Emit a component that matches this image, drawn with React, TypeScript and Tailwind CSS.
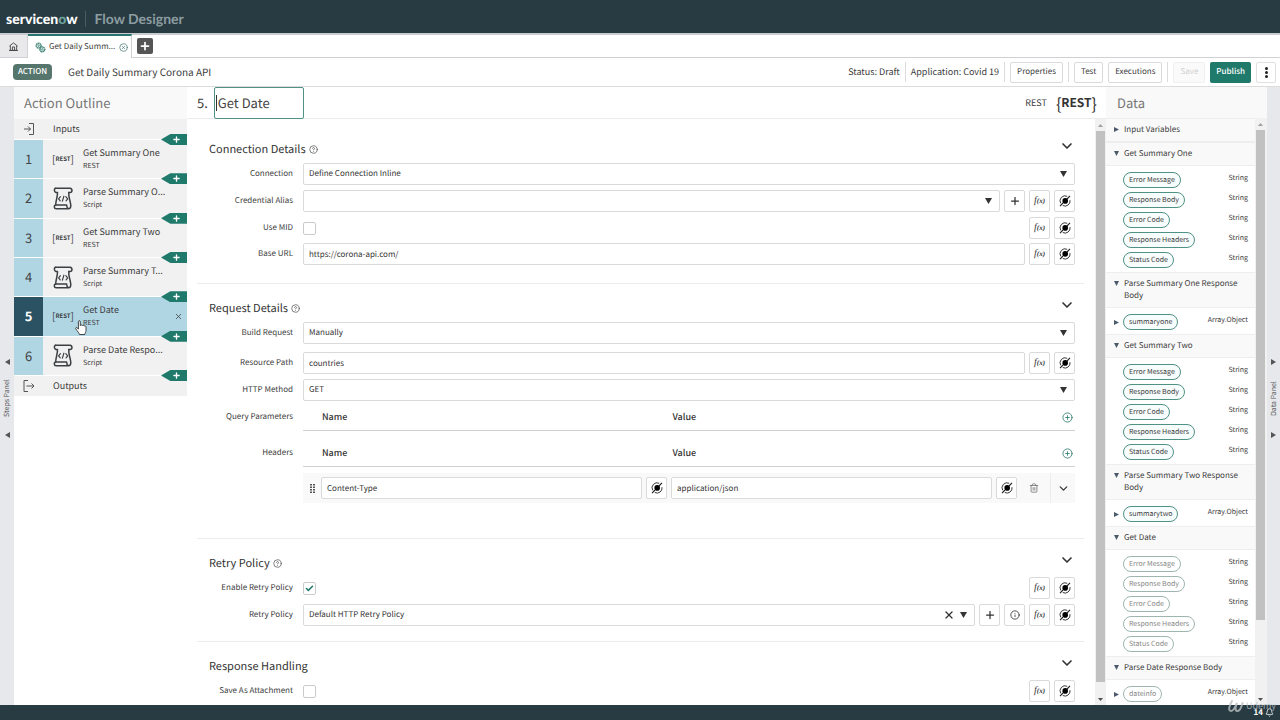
import React, { useState } from 'react';
import { Check, ChevronDown, Plus, X, Info, CircleHelp, CirclePlus, CircleX, Trash2, Bell } from 'lucide-react';
import clsx from 'clsx';

interface Step {
  name: string;
  kind: 'REST' | 'Script';
}

interface DataGroup {
  title: string;
  open: boolean;
  muted?: boolean;
  array?: boolean;
  pills: string[];
}

const STEPS: Step[] = [
  { name: 'Get Summary One', kind: 'REST' },
  { name: 'Parse Summary O...', kind: 'Script' },
  { name: 'Get Summary Two', kind: 'REST' },
  { name: 'Parse Summary T...', kind: 'Script' },
  { name: 'Get Date', kind: 'REST' },
  { name: 'Parse Date Respo...', kind: 'Script' },
];

const REST_PILLS = ['Error Message', 'Response Body', 'Error Code', 'Response Headers', 'Status Code'];

const DATA_GROUPS: DataGroup[] = [
  { title: 'Input Variables', open: false, pills: [] },
  { title: 'Get Summary One', open: true, pills: REST_PILLS },
  { title: 'Parse Summary One Response Body', open: true, array: true, pills: ['summaryone'] },
  { title: 'Get Summary Two', open: true, pills: REST_PILLS },
  { title: 'Parse Summary Two Response Body', open: true, array: true, pills: ['summarytwo'] },
  { title: 'Get Date', open: true, muted: true, pills: REST_PILLS },
  { title: 'Parse Date Response Body', open: true, muted: true, array: true, pills: ['dateinfo'] },
];

const Triangle = ({ dir, className }: { dir: 'up' | 'down' | 'left' | 'right'; className?: string }) => {
  const points = {
    up: '0,8 8,8 4,0',
    down: '0,0 8,0 4,8',
    left: '8,0 8,8 0,4',
    right: '0,0 0,8 8,4',
  };
  return (
    <svg viewBox="0 0 8 8" preserveAspectRatio="none" className={clsx('shrink-0 fill-current', className)} aria-hidden="true">
      <polygon points={points[dir]} />
    </svg>
  );
};

const ScriptIcon = () => (
  <svg viewBox="0 0 20 23" className="h-[23px] w-5 text-[#3c4043]" fill="none" stroke="currentColor" strokeWidth="1.5" strokeLinejoin="round" strokeLinecap="round">
    <path d="M2.500 1.200h14.500c2.600.3 2.600 4.300 0 4.300h-1.200" />
    <path d="M2.500 1.200c-1.600.6-1.600 3.600.4 4.300h1.600c.2 4.500-1.800 8-1.800 12.500" />
    <path d="M15.800 5.500c-.6 4.500 2 9.500 2 13 0 1.800-.6 3.300-2.200 3.300H3.200c-2.400 0-2.600-3.600-.2-3.800h10.600c0 1.600.6 3 2 3.800" />
    <path d="M7.400 9.600 5.600 11.800l1.600 2M12.800 9.600l1.900 2.200-1.600 2M10.900 9.200l-1.500 5" strokeWidth="1.200" />
  </svg>
);

const PillIcon = () => (
  <svg viewBox="0 0 12 12" className="h-3 w-3" fill="none" stroke="#222" strokeWidth=".9">
    <circle cx="6.200" cy="5.900" r="2.800" fill="#000" stroke="none" />
    <path d="M8.200 1.300A5 5 0 0 0 1.700 8.300" />
    <path d="M3.800 10.500A5 5 0 0 0 11 5.200" />
    <path d="M8 4 11 .900M1 11.200 4 8" strokeWidth="1.100" />
  </svg>
);

const GearsIcon = () => (
  <svg viewBox="0 0 12 12" className="h-[11px] w-[11px] shrink-0" fill="none" stroke="#4c8c80">
    <circle cx="4" cy="4" r="2.600" strokeWidth="1.700" strokeDasharray="1.700 .3" />
    <circle cx="4" cy="4" r=".8" />
    <circle cx="8" cy="8" r="2.600" strokeWidth="1.700" strokeDasharray="1.700 .3" />
    <circle cx="8" cy="8" r=".8" />
  </svg>
);

const HomeIcon = () => (
  <svg viewBox="0 0 10 10" className="h-[9px] w-[9px]" fill="none" stroke="#444" strokeWidth="1">
    <path d="M.5 4.500 5 1l4.500 3.500M1.500 4v5.300h7V4M3.800 9V5.500h2.400V9M0 9.400h10" />
  </svg>
);

const ExitIcon = ({ out }: { out?: boolean }) => (
  <svg viewBox="0 0 12 12" className="h-3 w-3" fill="none" stroke="#555" strokeWidth="1">
    {out ? <path d="M5 .5H1v11h4M3.500 6h7.500M8.500 3.500 11 6 8.500 8.500" /> : <path d="M6 .5h4.500v11H6M1 6h6.500M5 3.500 7.500 6 5 8.500" />}
  </svg>
);

const IconButton = ({ label, children }: { label: string; children: React.ReactNode }) => (
  <button
    type="button"
    aria-label={label}
    className="flex h-[22px] w-[21px] shrink-0 items-center justify-center rounded-xs border border-[#d8dadb] bg-white text-[#333]"
  >
    {children}
  </button>
);

const PillButton = () => (
  <IconButton label="Data pill picker">
    <PillIcon />
  </IconButton>
);

const FxButtons = () => (
  <>
    <IconButton label="Transform function">
      <span className="flex items-baseline font-['Liberation_Serif',serif] text-[10px] leading-3 italic">
        f<span className="text-[7px] font-bold">(x)</span>
      </span>
    </IconButton>
    <PillButton />
  </>
);

const PlusButton = ({ label }: { label: string }) => (
  <IconButton label={label}>
    <Plus className="h-3 w-3" strokeWidth={2.5} />
  </IconButton>
);

interface FieldProps {
  id: string;
  label: string;
  className?: string;
  children: React.ReactNode;
}

const Field = ({ id, label, className, children }: FieldProps) => (
  <div className={clsx('flex items-center', className)}>
    <label htmlFor={id} className="mr-[10px] w-24 shrink-0 text-right text-[8px]">
      {label}
    </label>
    <div className="flex min-w-0 flex-1 items-center gap-1">{children}</div>
  </div>
);

const inputClass = 'h-[22px] w-full min-w-0 flex-1 rounded-xs border border-[#d8dadb] bg-white px-[5px] text-[8px] text-[#333] outline-none';

const SelectBox = ({ id, value, clearable }: { id: string; value: string; clearable?: boolean }) => (
  <div className="relative flex min-w-0 flex-1">
    <select id={id} defaultValue={value} className={clsx(inputClass, 'appearance-none')}>
      <option value={value}>{value}</option>
    </select>
    <div className="pointer-events-none absolute inset-y-0 right-2 flex items-center gap-[5px] text-[#333]">
      {clearable && <X className="h-3 w-3" strokeWidth={2.5} />}
      <Triangle dir="down" className="h-[6px] w-[7px]" />
    </div>
  </div>
);

const CheckBox = ({ id, initial = false }: { id: string; initial?: boolean }) => {
  const [checked, setChecked] = useState(initial);
  return (
    <div className="relative mr-auto flex h-[22px] items-center">
      <input
        id={id}
        type="checkbox"
        checked={checked}
        onChange={() => setChecked(prev => !prev)}
        className="h-[13px] w-[13px] appearance-none rounded-xs border border-[#c9cccd] bg-white"
      />
      {checked && <Check className="pointer-events-none absolute left-[2px] h-[9px] w-[9px] text-[#1f7a6c]" strokeWidth={4} />}
    </div>
  );
};

interface SectionProps {
  title: string;
  help?: boolean;
  className?: string;
  children: React.ReactNode;
}

const Section = ({ title, help, className, children }: SectionProps) => (
  <section className={clsx('border-b border-[#ececec] pt-[11px] pr-[9px]', className)}>
    <div className="mb-px flex h-[26px] items-center pl-3">
      <h2 className="text-[11px] text-[#333]">{title}</h2>
      {help && <CircleHelp className="ml-[3px] h-[9px] w-[9px] text-[#555]" />}
      <button type="button" aria-label={`Collapse ${title}`} className="ml-auto pb-[6px]">
        <ChevronDown className="h-4 w-4 text-[#333]" strokeWidth={2.5} />
      </button>
    </div>
    {children}
  </section>
);

const TableHead = () => (
  <thead className="block">
    <tr className="flex h-[26px] items-center border-b border-[#cfd2d3] text-left text-[9px] text-[#333]">
      <th className="w-[18px] shrink-0" />
      <th className="min-w-0 flex-1 pb-[2px] pl-px font-medium">Name</th>
      <th className="min-w-0 flex-1 pb-[2px] font-medium">Value</th>
      <th className="flex w-[52px] shrink-0 justify-end pr-[2px]">
        <button type="button" aria-label="Add row">
          <CirclePlus className="h-[11px] w-[11px] text-[#3c8578]" />
        </button>
      </th>
    </tr>
  </thead>
);

const ScrollBar = ({ thumb }: { thumb: string }) => (
  <div className="flex w-[11px] shrink-0 flex-col items-center bg-[#f1f1f1]" aria-hidden="true">
    <div className="flex h-3 items-center text-[#a0a0a0]">
      <Triangle dir="up" className="h-[3px] w-[5px]" />
    </div>
    <div className="flex w-[9px] min-h-0 flex-1">
      <div className={clsx('w-full bg-[#c1c1c1]', thumb)} />
    </div>
    <div className="flex h-3 items-center text-[#505050]">
      <Triangle dir="down" className="h-[3px] w-[5px]" />
    </div>
  </div>
);

const Rail = ({ label, dir, className }: { label: string; dir: 'left' | 'right'; className: string }) => (
  <button type="button" className={clsx('flex shrink-0 flex-col items-center justify-center gap-[14px] bg-[#e6e8ec] pt-1 text-[#555]', className)}>
    <Triangle dir={dir} className="h-[6px] w-[5px]" />
    <span className="flex h-[39px] items-center justify-center text-[7px] leading-3 whitespace-nowrap rotate-180 [writing-mode:vertical-rl]">
      {label}
    </span>
    <Triangle dir={dir} className="h-[6px] w-[5px]" />
  </button>
);

const AddMarker = () => (
  <button
    type="button"
    aria-label="Add step"
    className="absolute -top-[6px] right-0 z-10 flex h-[11px] w-[26px] items-center justify-center bg-[#1f7a6c] pl-[5px] text-white [clip-path:polygon(0_50%,36%_0,100%_0,100%_100%,36%_100%)]"
  >
    <Plus className="h-[9px] w-[9px]" strokeWidth={3.5} />
  </button>
);

const OutlinePanel = ({ selected, onSelect }: { selected: number; onSelect: (i: number) => void }) => (
  <aside className="relative flex w-[173px] shrink-0 flex-col">
    <h2 className="flex h-8 shrink-0 items-center bg-[#f9f9f9] pl-[10px] text-[13px] text-[#777]">Action Outline</h2>
    <div className="flex h-5 shrink-0 items-center bg-[#f1f1f1] pl-[9px] text-[9px]">
      <ExitIcon />
      <span className="ml-[18px]">Inputs</span>
    </div>
    <ol className="grid h-[236px] shrink-0 grid-rows-6">
      {STEPS.map((step, i) => {
        const active = i === selected;
        return (
          <li key={step.name} className={clsx('relative flex border-t border-white', active ? 'bg-[#b0d6e4]' : 'bg-[#f1f1f1]')}>
            <button type="button" onClick={() => onSelect(i)} className="flex min-w-0 flex-1 items-stretch text-left">
              <span
                className={clsx(
                  'flex w-[29px] shrink-0 items-center justify-center text-[13px]',
                  active ? 'bg-[#2b5263] font-bold text-white' : 'bg-[#b0d6e4] text-[#444]',
                )}
              >
                {i + 1}
              </span>
              <span className="flex w-10 shrink-0 items-center justify-center">
                {step.kind === 'REST' ? (
                  <span className="flex items-center text-[#3c4043]">
                    <span className="text-[10px] leading-3">[</span>
                    <span className="text-[6px] font-bold">REST</span>
                    <span className="text-[10px] leading-3">]</span>
                  </span>
                ) : (
                  <ScriptIcon />
                )}
              </span>
              <span className="pt-[6px] whitespace-nowrap">
                <span className="block text-[9px] leading-[13px]">{step.name}</span>
                <span className="block text-[7px] leading-[14px]">{step.kind}</span>
              </span>
            </button>
            {active && (
              <button type="button" aria-label="Delete step" className="absolute inset-y-0 right-1 flex items-center">
                <X className="h-[9px] w-[9px]" />
              </button>
            )}
            <AddMarker />
          </li>
        );
      })}
    </ol>
    <div className="relative flex h-[21px] shrink-0 items-center border-t border-white bg-[#f1f1f1] pl-[9px] text-[9px]">
      <ExitIcon out />
      <span className="ml-[18px]">Outputs</span>
      <AddMarker />
    </div>
    {/* pointer hovering the selected step */}
    <svg viewBox="0 0 12 15" className="pointer-events-none absolute top-[233px] left-[61px] z-20 h-[15px] w-3" fill="#fff" stroke="#333" strokeWidth=".9" strokeLinejoin="round">
      <path d="M3.400 9.200V1.700c0-1.400 1.900-1.400 1.900 0v3.800c.2-.9 1.800-.8 1.900.2.300-.8 1.800-.6 1.900.4.500-.7 1.900-.3 1.900.8v3.500c0 2-1.200 2.600-1.200 4.100H4.400c0-1.600-2-3-3.600-5.600-.6-1.200.7-2 1.600-1z" />
    </svg>
  </aside>
);

const DataPanel = () => (
  <aside className="flex w-[161px] shrink-0 flex-col">
    <h2 className="flex h-[31px] shrink-0 items-center bg-[#f9f9f9] pl-[11px] text-[13px] text-[#777]">Data</h2>
    <div className="flex min-h-0 flex-1">
      <div className="min-w-0 flex-1 overflow-hidden">
        {DATA_GROUPS.map(group => (
          <div key={group.title}>
            <button
              type="button"
              className="flex w-full items-baseline border-y border-[#eee] bg-[#f9f9f9] py-[5px] pr-3 pl-2 text-left text-[8px] leading-3"
            >
              <Triangle dir={group.open ? 'down' : 'right'} className="mr-[5px] h-[5px] w-[5px] text-[#4b5b6b]" />
              <span>{group.title}</span>
            </button>
            {group.open && (
              <ul className="pt-1 pb-[2px]">
                {group.pills.map(pill => (
                  <li key={pill} className="flex h-5 items-center pr-[7px] pl-2">
                    <span className="w-[9px] shrink-0">{group.array && <Triangle dir="right" className="h-[5px] w-[5px] text-[#4b5b6b]" />}</span>
                    <span
                      className={clsx(
                        'flex h-4 items-center rounded-full border px-[5px] text-[7px]',
                        group.muted ? 'border-[#9fb5b0] text-[#888]' : 'border-[#4f9184] bg-[#f7fcfc]',
                      )}
                    >
                      {pill}
                    </span>
                    <span className="ml-auto self-start text-[7px] leading-4">{group.array ? 'Array.Object' : 'String'}</span>
                  </li>
                ))}
              </ul>
            )}
          </div>
        ))}
      </div>
      <ScrollBar thumb="h-[87%]" />
      <div className="w-px bg-[#f1f1f1]" />
    </div>
  </aside>
);

const ToolButton = ({ children }: { children: React.ReactNode }) => (
  <button type="button" className="h-[21px] rounded-xs border border-[#d8dadb] bg-white px-[6px]">
    {children}
  </button>
);

const Divider = () => <span className="h-5 w-px bg-[#dcdcdc]" />;

export default function App() {
  const [selected, setSelected] = useState(4);

  return (
    <div className="relative flex h-screen flex-col overflow-hidden bg-white font-['Noto_Sans_CJK_SC','Noto_Sans',sans-serif] text-[9px] leading-4 text-[#3c3c3c] [&_*]:[text-rendering:geometricPrecision]">
      <header className="flex h-[33px] shrink-0 items-center bg-[#283b42] pt-1 pl-[6px] font-['Lato',sans-serif]">
        <span className="text-[14px] font-black text-white">
          servicen<span className="text-[#6ea39a]">o</span>w
        </span>
        <span className="mx-2 h-4 w-px bg-[#4a5c62]" />
        <span className="text-[14px] font-bold text-[#8d9da1]">Flow Designer</span>
      </header>

      <nav className="flex h-[25px] shrink-0 items-stretch border-t-2 border-[#c9cccf]">
        <a href="#home" aria-label="Home" className="flex w-7 items-center justify-center border-r border-b border-[#cfd1d4] bg-[#e9e9ec]">
          <HomeIcon />
        </a>
        <div className="-mt-px flex w-[104px] items-center border-t-2 border-r border-t-[#2a7472] border-r-[#cfd1d4] pl-[7px] text-[8px]">
          <GearsIcon />
          <a href="#action" className="ml-[3px] whitespace-nowrap">
            Get Daily Summ...
          </a>
          <button type="button" aria-label="Close tab" className="mr-[3px] ml-auto">
            <CircleX className="h-[9px] w-[9px] text-[#4c7c74]" />
          </button>
        </div>
        <div className="flex flex-1 items-center border-b border-[#cfd1d4] pl-[5px]">
          <button type="button" aria-label="New tab" className="flex h-4 w-4 items-center justify-center rounded-xs bg-[#555] text-white">
            <Plus className="h-3 w-3" strokeWidth={3.5} />
          </button>
        </div>
      </nav>

      <div className="flex h-[29px] shrink-0 items-center border-b border-[#dcdcdc] pr-1 pl-[13px] text-[8px]">
        <span className="flex h-4 w-[39px] items-center justify-center rounded-sm bg-[#56766d] font-medium text-white">ACTION</span>
        <h1 className="ml-4 text-[10px]">Get Daily Summary Corona API</h1>
        <div className="ml-auto flex items-center gap-[5px]">
          <span className="text-[9px]">Status: Draft</span>
          <Divider />
          <span className="text-[9px]">Application: Covid 19</span>
          <Divider />
          <ToolButton>Properties</ToolButton>
          <Divider />
          <ToolButton>Test</ToolButton>
          <ToolButton>Executions</ToolButton>
          <Divider />
          <button type="button" disabled className="h-[21px] rounded-xs border border-[#f0f0f0] bg-[#fafafa] px-[6px] text-[#d0d0d0]">
            Save
          </button>
          <button type="button" className="h-[21px] rounded-xs bg-[#1f7a6c] px-[6px] font-medium text-white">
            Publish
          </button>
          <button type="button" aria-label="More actions" className="flex h-[21px] w-5 flex-col items-center justify-center gap-px rounded-xs border border-[#e0e0e0]">
            <span className="h-[3px] w-[3px] rounded-full bg-[#222]" />
            <span className="h-[3px] w-[3px] rounded-full bg-[#222]" />
            <span className="h-[3px] w-[3px] rounded-full bg-[#222]" />
          </button>
        </div>
      </div>

      <main className="flex min-h-0 flex-1">
        <Rail label="Steps Panel" dir="left" className="w-[14px]" />
        <OutlinePanel selected={selected} onSelect={setSelected} />

        <div className="flex min-w-0 flex-1 flex-col">
          <div className="flex h-8 shrink-0 items-center border-b border-[#ececec] pr-[9px] pl-[10px]">
            <label htmlFor="step-name" className="mr-[6px] text-[13px]">
              5.
            </label>
            <div className="relative">
              <input
                id="step-name"
                defaultValue="Get Date"
                className="block h-8 w-[90px] rounded-xs border border-[#4f9184] bg-white px-[3px] text-[13px] text-[#444] outline-none"
              />
              <span className="absolute top-2 left-[2px] h-4 w-px bg-[#333]" />
            </div>
            <span className="mr-[9px] ml-auto text-[9px]">REST</span>
            <span className="flex items-center text-[#333]">
              <span className="text-[16px]">{'{'}</span>
              <span className="text-[12px] font-bold">REST</span>
              <span className="text-[16px]">{'}'}</span>
            </span>
          </div>

          <div className="flex min-h-0 flex-1">
            <div className="min-w-0 flex-1 overflow-hidden pt-[6px] pr-[11px] pl-[10px]">
              <Section title="Connection Details" help className="pb-[18px]">
                <Field id="connection" label="Connection" className="mb-[5px]">
                  <SelectBox id="connection" value="Define Connection Inline" />
                </Field>
                <Field id="alias" label="Credential Alias" className="mb-[5px]">
                  <SelectBox id="alias" value="" />
                  <PlusButton label="Add alias" />
                  <FxButtons />
                </Field>
                <Field id="mid" label="Use MID" className="mb-1">
                  <CheckBox id="mid" />
                  <FxButtons />
                </Field>
                <Field id="base-url" label="Base URL">
                  <input id="base-url" defaultValue="https://corona-api.com/" className={inputClass} />
                  <FxButtons />
                </Field>
              </Section>

              <Section title="Request Details" help className="pb-[35px]">
                <Field id="build" label="Build Request" className="mb-2">
                  <SelectBox id="build" value="Manually" />
                </Field>
                <Field id="path" label="Resource Path" className="mb-[5px]">
                  <input id="path" defaultValue="countries" className={inputClass} />
                  <FxButtons />
                </Field>
                <Field id="method" label="HTTP Method" className="mb-1">
                  <SelectBox id="method" value="GET" />
                </Field>
                <div className="mb-[10px] flex">
                  <span id="query-label" className="mr-[10px] w-24 shrink-0 pt-1 text-right text-[8px]">
                    Query Parameters
                  </span>
                  <table aria-labelledby="query-label" className="block min-w-0 flex-1">
                    <TableHead />
                  </table>
                </div>
                <div className="flex">
                  <span id="headers-label" className="mr-[10px] w-24 shrink-0 pt-1 text-right text-[8px]">
                    Headers
                  </span>
                  <table aria-labelledby="headers-label" className="block min-w-0 flex-1">
                    <TableHead />
                    <tbody className="mt-[6px] block bg-[#f9f9f9]">
                      <tr className="flex h-[30px] items-center">
                        <td className="flex w-[18px] shrink-0 justify-center">
                          <svg viewBox="0 0 5 9" className="h-[9px] w-[5px]" fill="#555">
                            <path d="M0 0h2v1.500H0zM3 0h2v1.500H3zM0 2.500h2V4H0zM3 2.500h2V4H3zM0 5h2v1.500H0zM3 5h2v1.500H3zM0 7.500h2V9H0zM3 7.500h2V9H3z" />
                          </svg>
                        </td>
                        <td className="mr-1 flex min-w-0 flex-1 items-center gap-1">
                          <input aria-label="Header name" defaultValue="Content-Type" className={inputClass} />
                          <PillButton />
                        </td>
                        <td className="flex min-w-0 flex-1 items-center gap-1">
                          <input aria-label="Header value" defaultValue="application/json" className={inputClass} />
                          <PillButton />
                        </td>
                        <td className="flex w-[34px] shrink-0 items-center justify-center self-stretch border-r border-[#ececec]">
                          <button type="button" aria-label="Delete header">
                            <Trash2 className="h-[10px] w-[10px] text-[#777]" />
                          </button>
                        </td>
                        <td className="flex w-6 shrink-0 justify-center">
                          <button type="button" aria-label="Expand header">
                            <ChevronDown className="h-[13px] w-[13px]" strokeWidth={2.5} />
                          </button>
                        </td>
                      </tr>
                    </tbody>
                  </table>
                </div>
              </Section>

              <Section title="Retry Policy" help className="pb-[15px]">
                <Field id="enable-retry" label="Enable Retry Policy" className="mb-[5px]">
                  <CheckBox id="enable-retry" initial />
                  <FxButtons />
                </Field>
                <Field id="retry" label="Retry Policy">
                  <SelectBox id="retry" value="Default HTTP Retry Policy" clearable />
                  <PlusButton label="Add retry policy" />
                  <IconButton label="Preview retry policy">
                    <Info className="h-[10px] w-[10px]" />
                  </IconButton>
                  <FxButtons />
                </Field>
              </Section>

              <Section title="Response Handling">
                <Field id="attachment" label="Save As Attachment" className="mb-4">
                  <CheckBox id="attachment" />
                  <FxButtons />
                </Field>
              </Section>
            </div>
            <ScrollBar thumb="h-[98%]" />
          </div>
        </div>

        <DataPanel />
        <Rail label="Data Panel" dir="right" className="w-[13px]" />
      </main>

      <footer className="flex h-[15px] shrink-0 items-center justify-end gap-[2px] bg-[#283b42] pr-[6px] text-[8px] font-bold text-white">
        14
        <Bell className="h-[9px] w-[9px]" />
      </footer>

      <div className="pointer-events-none absolute right-1 bottom-2 z-30 flex items-center gap-[2px] text-[#b9bfc2] opacity-80">
        <svg viewBox="0 0 16 12" className="h-3 w-4" fill="none" stroke="currentColor" strokeWidth="2" strokeLinecap="round">
          <path d="M4 1C1 6 0 11 3 11S7.500 6 9 3C7 8 7 11 9.500 11s4-4 5-8" />
        </svg>
        <span className="text-[9px] leading-3">Udemy</span>
      </div>
    </div>
  );
}
